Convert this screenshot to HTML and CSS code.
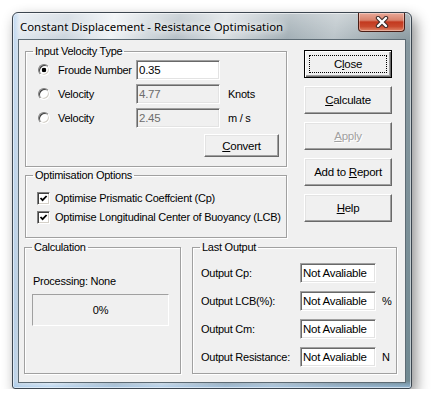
FILE: index.html
```html
<!doctype html>
<html>
<head>
<meta charset="utf-8">
<title>Constant Displacement - Resistance Optimisation</title>
<link rel="stylesheet" href="styles.css">
</head>
<body>
<div class="window">
	<div class="titlebar">
		<span class="title">Constant Displacement - Resistance Optimisation</span>
		<span class="close-x">
			<svg width="14" height="12" viewBox="0 0 14 12">
				<path d="M3 2 L11 10 M11 2 L3 10" stroke="#3b2a28" stroke-width="4.4" stroke-linecap="round"/>
				<path d="M3 2 L11 10 M11 2 L3 10" stroke="#fff" stroke-width="2.4" stroke-linecap="round"/>
			</svg>
		</span>
	</div>

	<div class="client">
		<div class="top">
			<div class="left">
				<fieldset class="velocity">
					<legend>Input Velocity Type</legend>
					<div class="row">
						<span class="radio checked"></span>
						<span class="label">Froude Number</span>
						<span class="edit">0.35</span>
					</div>
					<div class="row">
						<span class="radio"></span>
						<span class="label">Velocity</span>
						<span class="edit disabled">4.77</span>
						<span class="unit">Knots</span>
					</div>
					<div class="row">
						<span class="radio"></span>
						<span class="label">Velocity</span>
						<span class="edit disabled">2.45</span>
						<span class="unit">m / s</span>
					</div>
					<span class="btn convert"><span><u>C</u>onvert</span></span>
				</fieldset>

				<fieldset class="options">
					<legend>Optimisation Options</legend>
					<div class="check-row">
						<span class="check">
							<svg width="9" height="9" viewBox="0 0 9 9"><path d="M1.5 4 L3.6 6.2 L7.6 2" stroke="#000" stroke-width="1.8" fill="none"/></svg>
						</span>
						<span>Optimise Prismatic Coeffcient (Cp)</span>
					</div>
					<div class="check-row">
						<span class="check">
							<svg width="9" height="9" viewBox="0 0 9 9"><path d="M1.5 4 L3.6 6.2 L7.6 2" stroke="#000" stroke-width="1.8" fill="none"/></svg>
						</span>
						<span>Optimise Longitudinal Center of Buoyancy (LCB)</span>
					</div>
				</fieldset>
			</div>

			<div class="buttons">
				<span class="btn default"><span class="focus"><span>C<u>l</u>ose</span></span></span>
				<span class="btn"><span><u>C</u>alculate</span></span>
				<span class="btn off"><span><u>A</u>pply</span></span>
				<span class="btn"><span>Add to <u>R</u>eport</span></span>
				<span class="btn"><span><u>H</u>elp</span></span>
			</div>
		</div>

		<div class="bottom">
			<fieldset class="calc">
				<legend>Calculation</legend>
				<div class="status">Processing: None</div>
				<div class="progress">0%</div>
			</fieldset>

			<fieldset class="output">
				<legend>Last Output</legend>
				<div class="out-row">
					<span class="out-label">Output Cp:</span>
					<span class="edit">Not Avaliable</span>
				</div>
				<div class="out-row">
					<span class="out-label">Output LCB(%):</span>
					<span class="edit">Not Avaliable</span>
					<span class="out-unit">%</span>
				</div>
				<div class="out-row">
					<span class="out-label">Output Cm:</span>
					<span class="edit">Not Avaliable</span>
				</div>
				<div class="out-row">
					<span class="out-label">Output Resistance:</span>
					<span class="edit">Not Avaliable</span>
					<span class="out-unit">N</span>
				</div>
			</fieldset>
		</div>
	</div>
</div>
</body>
</html>
```

FILE: styles.css
```css
* {
	box-sizing: border-box;
}

body {
	margin: 0;
	background: #fff;
	font: 11px "Liberation Sans", Arial, sans-serif;
	letter-spacing: -0.25px;
	color: #000;
}

.window {
	margin: 12px 0 0 12px;
	width: 400px;
	height: 377px;
	padding: 0 5px 5px;
	border: 1px solid #3c4650;
	border-radius: 6px 6px 3px 3px;
	background:
		linear-gradient(0deg, rgba(160, 200, 238, 0.75), rgba(160, 200, 238, 0) 7px),
		linear-gradient(90deg, rgba(170, 205, 240, 0.7), rgba(170, 205, 240, 0) 7px),
		linear-gradient(180deg, rgba(255, 255, 255, 0.35), rgba(255, 255, 255, 0) 30px),
		linear-gradient(100deg, #e4ebf2 0%, #c9d3dc 12%, #eef2f5 22%, #b3bec5 36%, #d9dfe3 46%, #9eabb2 60%, #b7c1c6 70%, #8b9aa1 84%, #6f8891 100%);
	box-shadow: inset 0 0 0 1px rgba(255, 255, 255, 0.55), 4px 6px 14px rgba(0, 0, 0, 0.45);
}

.titlebar {
	height: 26px;
	display: flex;
	justify-content: space-between;
	align-items: flex-start;
}

.title {
	font: 11.4px "Noto Sans", "Open Sans", sans-serif;
	letter-spacing: 0;
	padding: 6px 0 0 2px;
	color: #000;
	text-shadow: 0 0 6px #fff, 0 0 10px #fff;
}

.close-x {
	width: 47px;
	height: 19px;
	margin-right: 1px;
	border: 1px solid #4a1e16;
	border-top: 0;
	border-radius: 0 0 4px 4px;
	background: linear-gradient(180deg, #e9a999 0%, #d8826c 40%, #c3391f 50%, #c94a2e 75%, #e0876a 100%);
	box-shadow: inset 0 0 0 1px rgba(255, 255, 255, 0.35);
	display: flex;
	align-items: center;
	justify-content: center;
}

.client {
	height: 344px;
	border: 1px solid #5d6b74;
	background: #f0f0f0;
	padding-top: 5px;
}

.top {
	display: flex;
}

.left {
	margin-left: 6px;
	width: 262px;
}

fieldset {
	margin: 0;
	padding: 0;
	border: 1px solid #a0a0a0;
	box-shadow: 1px 1px 0 #fff, inset 1px 1px 0 #fff;
	min-width: 0;
}

legend {
	margin-left: 7px;
	padding: 0 2px;
	line-height: 13px;
}

/* input velocity */

.velocity {
	height: 122px;
	padding-top: 2px;
	display: flex;
	flex-direction: column;
}

.row {
	display: flex;
	align-items: center;
	height: 20px;
	margin-bottom: 4px;
}

.radio {
	width: 12px;
	height: 12px;
	margin-left: 12px;
	border-radius: 50%;
	background: #fff;
	border: 1px solid;
	border-color: #808080 #fff #fff #808080;
	box-shadow: inset 1px 1px 0 #404040, inset -1px -1px 0 #d4d0c8;
}

.radio.checked {
	background: radial-gradient(circle, #000 0 2px, #fff 2.6px);
}

.label {
	width: 78px;
	margin-left: 8px;
	white-space: nowrap;
}

.edit {
	width: 84px;
	height: 20px;
	padding: 2px 2px;
	background: #fff;
	border: 1px solid;
	border-color: #a0a0a0 #fff #fff #a0a0a0;
	box-shadow: inset 1px 1px 0 #696969, inset -1px -1px 0 #e3e3e3;
	font-size: 11.5px;
	line-height: 14px;
	white-space: nowrap;
	overflow: hidden;
}

.edit.disabled {
	background: #f0f0f0;
	color: #6d6d6d;
}

.unit {
	margin-left: 8px;
}

.btn {
	display: flex;
	align-items: center;
	justify-content: center;
	width: 88px;
	height: 28px;
	background: #f0f0f0;
	border: 1px solid;
	border-color: #fff #696969 #696969 #fff;
	box-shadow: inset -1px -1px 0 #a0a0a0, inset 1px 1px 0 #e3e3e3;
	font-size: 11.5px;
	white-space: nowrap;
}

.convert {
	width: 75px;
	height: 23px;
	margin: 2px 7px 0 auto;
}

.btn.default {
	border: 1px solid #000;
	box-shadow: inset 1px 1px 0 #fff, inset -1px -1px 0 #696969, inset -2px -2px 0 #a0a0a0;
}

.focus {
	width: 78px;
	height: 18px;
	border: 1px dotted #000;
	display: flex;
	align-items: center;
	justify-content: center;
}

.btn.off {
	color: #a0a0a0;
	text-shadow: 1px 1px 0 #fff;
}

.buttons {
	margin-left: 17px;
	padding-top: 5px;
	display: flex;
	flex-direction: column;
	gap: 8px;
}

/* optimisation options */

.options {
	margin-top: 2px;
	height: 69px;
	padding-top: 8px;
}

.check-row {
	display: flex;
	align-items: center;
	height: 16px;
	margin-bottom: 3px;
	white-space: nowrap;
}

.check {
	width: 13px;
	height: 13px;
	margin: 0 5px 0 11px;
	background: #fff;
	border: 1px solid;
	border-color: #808080 #fff #fff #808080;
	box-shadow: inset 1px 1px 0 #404040, inset -1px -1px 0 #d4d0c8;
	display: flex;
	align-items: center;
	justify-content: center;
}

/* bottom groups */

.bottom {
	display: flex;
	margin-top: 3px;
}

.calc {
	margin-left: 5px;
	width: 157px;
	height: 133px;
}

.status {
	margin: 21px 0 0 8px;
	line-height: 13px;
}

.progress {
	margin: 6px 0 0 7px;
	width: 137px;
	height: 32px;
	border: 1px solid;
	border-color: #a0a0a0 #fff #fff #a0a0a0;
	display: flex;
	align-items: center;
	justify-content: center;
}

.output {
	margin-left: 11px;
	width: 205px;
	height: 133px;
	padding-top: 9px;
}

.out-row {
	display: flex;
	align-items: center;
	height: 20px;
	margin-bottom: 8px;
	white-space: nowrap;
}

.out-label {
	width: 99px;
	margin-left: 8px;
}

.output .edit {
	width: 76px;
}

.out-unit {
	margin-left: 6px;
}
```
